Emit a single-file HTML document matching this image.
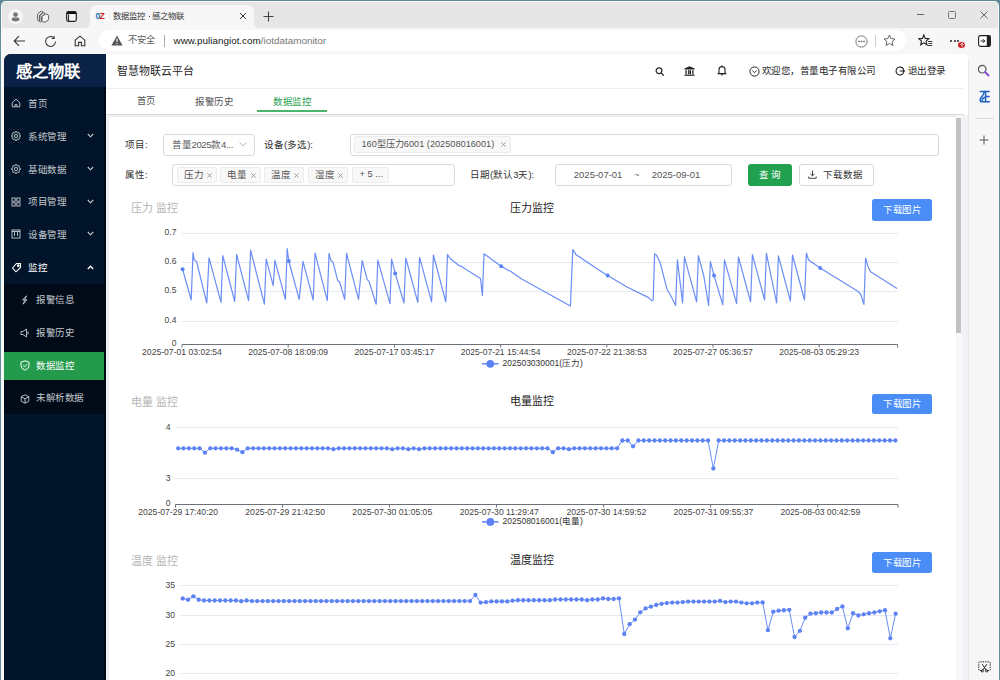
<!DOCTYPE html>
<html lang="zh-CN"><head><meta charset="utf-8">
<style>
*{margin:0;padding:0;box-sizing:border-box}
html,body{width:1000px;height:680px;overflow:hidden;background:#5f8b99;font-family:"Liberation Sans",sans-serif;}
.abs{position:absolute}
#win{position:absolute;left:1px;top:1px;width:998px;height:679px;background:#fcf9f9;border-radius:5px 5px 0 0;}
#tabstrip{position:absolute;left:2px;top:2px;width:996px;height:26px;background:#e6e6e6;border-radius:4px 4px 0 0}
#toolbar{position:absolute;left:2px;top:28px;width:996px;height:26px;background:#f7f7f7}
#pagebg{position:absolute;left:2px;top:54px;width:996px;height:626px;background:#f7f7f7}
#page{position:absolute;left:4px;top:54px;width:965px;height:626px;background:#fff;border-radius:7px 7px 0 0;overflow:hidden}
.t{position:absolute;white-space:nowrap;line-height:1}
.mi{font-size:9.5px;color:#c4c8ce}
</style></head><body>
<div id="win"></div>
<div id="tabstrip"></div>
<div id="toolbar"></div>
<div id="pagebg"></div>
<!-- tab strip icons -->
<div class="abs" style="left:8px;top:9px;width:15px;height:15px;border-radius:50%;background:#f6f6f6"></div>
<svg class="abs" style="left:8px;top:9px" width="15" height="15" viewBox="0 0 15 15"><circle cx="7.5" cy="5.6" r="2.4" fill="#777"/><path d="M3.6 10.2 Q3.6 8.6 5.2 8.6 H9.8 Q11.4 8.6 11.4 10.2 V10.6 Q11.4 12.4 7.5 12.4 Q3.6 12.4 3.6 10.6Z" fill="#777"/></svg>
<svg class="abs" style="left:36px;top:9px" width="14" height="14" viewBox="0 0 14 14" fill="none" stroke="#555" stroke-width="0.9" stroke-linejoin="round"><path d="M2 4.6 L5.2 2 L6.6 2.6 V4.2 L3.8 6.4 V11.6 L2.6 12.2 Q1.6 11.8 1.6 10.8 V5.4Z"/><path d="M3.8 6 L7 3.6 L8.6 4 V5.4 L5.6 7.8 V12.4 L4.4 13 Q3.6 12.6 3.6 11.8Z"/><path d="M6 7.4 L9.6 5 L12 5.6 Q12.6 5.9 12.6 6.6 V10.8 L9 13.2 L6.8 12.8 Q6 12.4 6 11.6Z" fill="#f2f2f2"/></svg>
<svg class="abs" style="left:66px;top:11px" width="11" height="11" viewBox="0 0 11 11"><rect x="0.7" y="0.7" width="9.6" height="9.6" rx="1.8" fill="#f4f4f4" stroke="#222" stroke-width="1.2"/><path d="M0.7 2.4 Q0.7 0.7 2.5 0.7 H8.5 Q10.3 0.7 10.3 2.4 V3 H0.7Z" fill="#111"/><path d="M2.6 3.4 V10" stroke="#222" stroke-width="1"/></svg>
<!-- active tab -->
<div class="abs" style="left:90px;top:5px;width:164px;height:23px;background:#f7f7f7;border-radius:6px 6px 0 0"></div>
<svg class="abs" style="left:84px;top:22px" width="6" height="6"><path d="M0 6 Q6 6 6 0 V6Z" fill="#f7f7f7"/></svg>
<svg class="abs" style="left:254px;top:22px" width="6" height="6"><path d="M6 6 Q0 6 0 0 V6Z" fill="#f7f7f7"/></svg>
<div class="t" style="left:95.5px;top:12px;font-size:8.6px;font-weight:bold;letter-spacing:-0.7px"><span style="color:#2a6fc0">0</span><span style="color:#d8201c">Z</span></div>
<div class="t" style="left:112.5px;top:11.5px;font-size:8.4px;letter-spacing:0.1px;color:#333">数据监控</div><div class="abs" style="left:148.8px;top:16px;width:1.2px;height:1.2px;background:#444"></div><div class="t" style="left:152px;top:11.5px;font-size:8.4px;letter-spacing:0.1px;color:#333">感之物联</div>
<svg class="abs" style="left:239px;top:12px" width="8" height="8" viewBox="0 0 8 8" stroke="#333" stroke-width="1"><path d="M1 1 L7 7 M7 1 L1 7"/></svg>
<svg class="abs" style="left:263px;top:11px" width="11" height="11" viewBox="0 0 11 11" stroke="#444" stroke-width="1.1"><path d="M5.5 0.5 V10.5 M0.5 5.5 H10.5"/></svg>
<!-- window controls -->
<div class="abs" style="left:917px;top:14px;width:7px;height:1px;background:#666"></div>
<div class="abs" style="left:948px;top:11px;width:7.5px;height:7.5px;border:1px solid #777;border-radius:1.5px"></div>
<svg class="abs" style="left:980px;top:11px" width="8" height="8" viewBox="0 0 8 8" stroke="#555" stroke-width="0.9"><path d="M0.5 0.5 L7.5 7.5 M7.5 0.5 L0.5 7.5"/></svg>
<!-- toolbar -->
<svg class="abs" style="left:13px;top:35px" width="13" height="12" viewBox="0 0 13 12" fill="none" stroke="#333" stroke-width="1.1"><path d="M12 6 H1.5 M6 1.2 L1.2 6 L6 10.8"/></svg>
<svg class="abs" style="left:43.5px;top:34.5px" width="13" height="13" viewBox="0 0 13 13" fill="none" stroke="#333" stroke-width="1.05"><path d="M11.4 6.5 A4.9 4.9 0 1 1 9.6 2.7"/><path d="M10.2 0.9 V3.4 H7.7"/></svg>
<svg class="abs" style="left:74px;top:35px" width="12" height="12" viewBox="0 0 12 12" fill="none" stroke="#333" stroke-width="1.1"><path d="M1.2 5.2 L6 1.2 L10.8 5.2 V10.8 H7.4 V7.4 H4.6 V10.8 H1.2Z"/></svg>
<div class="abs" style="left:99px;top:30px;width:807px;height:21px;background:#fff;border-radius:10.5px"></div>
<svg class="abs" style="left:111px;top:35px" width="12" height="11" viewBox="0 0 12 11"><path d="M6 0.5 L11.6 10.5 H0.4Z" fill="#555"/><path d="M6 3.6 V7" stroke="#fff" stroke-width="1.2"/><circle cx="6" cy="8.6" r="0.7" fill="#fff"/></svg>
<div class="t" style="left:128px;top:36px;font-size:9.3px;color:#606060">不安全</div>
<div class="abs" style="left:164px;top:35px;width:1px;height:12px;background:#aaa"></div>
<div class="t" style="left:173.5px;top:36px;font-size:9.9px;color:#1a1a1a">www.puliangiot.com<span style="color:#767676">/iotdatamonitor</span></div>
<svg class="abs" style="left:855px;top:35px" width="13" height="13" viewBox="0 0 13 13" fill="none" stroke="#666" stroke-width="0.9"><circle cx="6.5" cy="6.5" r="5.6"/><circle cx="4" cy="6.5" r="0.5" fill="#666"/><circle cx="6.5" cy="6.5" r="0.5" fill="#666"/><circle cx="9" cy="6.5" r="0.5" fill="#666"/></svg>
<div class="abs" style="left:875px;top:35px;width:1px;height:12px;background:#ccc"></div>
<svg class="abs" style="left:883px;top:34px" width="13" height="13" viewBox="0 0 13 13" fill="none" stroke="#555" stroke-width="0.9"><path d="M6.5 1 L8.1 4.6 L12 5 L9.1 7.6 L9.9 11.5 L6.5 9.5 L3.1 11.5 L3.9 7.6 L1 5 L4.9 4.6Z"/></svg>
<svg class="abs" style="left:918px;top:34px" width="15" height="13" viewBox="0 0 15 13" fill="none" stroke="#222" stroke-width="1.1"><path d="M5.8 1 L7.2 4.4 L10.8 4.7 L8.1 7.1 L8.9 10.8 L5.8 8.8 L2.7 10.8 L3.5 7.1 L0.8 4.7 L4.4 4.4Z"/><path d="M10 7.5 H14.2 M10.5 9.5 H14.2 M9.5 11.5 H14.2" stroke-width="0.9"/></svg>
<div class="abs" style="left:950px;top:40px;width:2px;height:2px;background:#222;border-radius:1px"></div>
<div class="abs" style="left:953.5px;top:40px;width:2px;height:2px;background:#222;border-radius:1px"></div>
<div class="abs" style="left:957px;top:40px;width:2px;height:2px;background:#222;border-radius:1px"></div>
<div class="abs" style="left:957.3px;top:40.5px;width:8.6px;height:8.6px;background:#c4161c;border-radius:50%;border:0.8px solid #fff"></div>
<svg class="abs" style="left:959px;top:42px" width="6" height="6" viewBox="0 0 6 6" stroke="#fff" stroke-width="0.9" fill="none"><path d="M3 5.2 V1.2 M1.4 2.8 L3 1.2 L4.6 2.8"/></svg>
<svg class="abs" style="left:978px;top:35px" width="13" height="12" viewBox="0 0 13 12"><rect x="0.6" y="0.6" width="11.8" height="10.8" rx="1.8" fill="#fff" stroke="#222" stroke-width="1.1"/><rect x="8.8" y="0.6" width="3.6" height="10.8" fill="#222"/><path d="M2.6 6 H6.6 M5 4.2 L6.8 6 L5 7.8" stroke="#222" stroke-width="1" fill="none"/></svg>
<!-- edge sidebar -->
<svg class="abs" style="left:977px;top:64px" width="13" height="13" viewBox="0 0 13 13" fill="none"><circle cx="5.2" cy="5.2" r="3.8" stroke="#555" stroke-width="1.2"/><path d="M8 8 L11.5 11.5" stroke="#8a4fd0" stroke-width="2" stroke-linecap="round"/></svg>
<svg class="abs" style="left:979px;top:89.5px" width="12" height="13" viewBox="0 0 12 13" fill="none" stroke="#1f62c6" stroke-width="1.5" stroke-linecap="round" stroke-linejoin="round"><path d="M1.2 1.4 H10.2 M6.6 1.4 V11.8 H10.4 M6.6 6.4 H10"/><path d="M5.2 1.6 Q5.2 4.4 3 6.4 Q1.2 8.2 1.2 10 Q1.2 11.8 3 11.8 H6.4 M6.4 7.2 Q3.4 7.8 3.2 10.2"/></svg>
<div class="abs" style="left:975px;top:118px;width:19px;height:1px;background:#ddd"></div>
<svg class="abs" style="left:979px;top:135px" width="10" height="10" viewBox="0 0 10 10" stroke="#555" stroke-width="1"><path d="M5 0.5 V9.5 M0.5 5 H9.5"/></svg>
<svg class="abs" style="left:977.5px;top:660.5px" width="13" height="12" viewBox="0 0 13 12" fill="none" stroke="#222" stroke-width="1"><path d="M3.5 9.5 H1.5 Q0.8 9.5 0.8 8.8 V1.6 Q0.8 0.8 1.6 0.8 H11.4 Q12.2 0.8 12.2 1.6 V8.8 Q12.2 9.5 11.5 9.5 H9.5" stroke-dasharray="1.4 1"/><path d="M4.2 3.2 L8.2 9 M8.8 3.2 L4.8 9"/><circle cx="4.3" cy="9.9" r="1.1"/><circle cx="8.7" cy="9.9" r="1.1"/></svg>
<div id="page">
<div id="g" class="abs" style="left:-4px;top:-54px;width:1000px;height:680px">
<!-- sidebar -->
<div class="abs" style="left:4px;top:54px;width:102px;height:626px;background:#021429"></div>
<div class="abs" style="left:104px;top:54px;width:2px;height:626px;background:#010b18"></div>
<div class="abs" style="left:4px;top:54px;width:102px;height:33px;background:#0a2245"></div>
<div class="t" style="left:16px;top:63px;font-size:16.3px;font-weight:bold;color:#fff">感之物联</div>
<div class="abs" style="left:4px;top:284px;width:100px;height:130px;background:#000b17"></div>
<div class="abs" style="left:4px;top:352px;width:100px;height:27.5px;background:#249a4c"></div>
<!-- menu items -->
<div class="t mi" style="left:28px;top:98.5px">首页</div>
<div class="t mi" style="left:28px;top:131.5px;letter-spacing:-0.5px">系统管理</div>
<div class="t mi" style="left:28px;top:164.5px;letter-spacing:-0.5px">基础数据</div>
<div class="t mi" style="left:28px;top:196.5px;letter-spacing:-0.5px">项目管理</div>
<div class="t mi" style="left:28px;top:229.5px;letter-spacing:-0.5px">设备管理</div>
<div class="t mi" style="left:28px;top:262.5px;color:#fff">监控</div>
<div class="t mi" style="left:36px;top:294.5px;letter-spacing:-0.5px">报警信息</div>
<div class="t mi" style="left:36px;top:327.5px;letter-spacing:-0.5px">报警历史</div>
<div class="t mi" style="left:36px;top:360.5px;color:#fff;letter-spacing:-0.5px">数据监控</div>
<div class="t mi" style="left:36px;top:392.5px;letter-spacing:-0.5px">未解析数据</div>
<!-- chevrons -->
<svg class="abs" style="left:87px;top:133px" width="7" height="5" viewBox="0 0 7 5" fill="none" stroke="#c8ccd2" stroke-width="1.1"><path d="M0.8 1 L3.5 3.8 L6.2 1"/></svg>
<svg class="abs" style="left:87px;top:166px" width="7" height="5" viewBox="0 0 7 5" fill="none" stroke="#c8ccd2" stroke-width="1.1"><path d="M0.8 1 L3.5 3.8 L6.2 1"/></svg>
<svg class="abs" style="left:87px;top:199px" width="7" height="5" viewBox="0 0 7 5" fill="none" stroke="#c8ccd2" stroke-width="1.1"><path d="M0.8 1 L3.5 3.8 L6.2 1"/></svg>
<svg class="abs" style="left:87px;top:231px" width="7" height="5" viewBox="0 0 7 5" fill="none" stroke="#c8ccd2" stroke-width="1.1"><path d="M0.8 1 L3.5 3.8 L6.2 1"/></svg>
<svg class="abs" style="left:87px;top:265px" width="7" height="5" viewBox="0 0 7 5" fill="none" stroke="#fff" stroke-width="1.3"><path d="M0.8 4 L3.5 1.2 L6.2 4"/></svg>
<!-- menu icons -->
<svg class="abs" style="left:11px;top:98px" width="10" height="10" viewBox="0 0 10 10" fill="none" stroke="#c8ccd2" stroke-width="0.9"><path d="M1.2 4.6 L5 1.2 L8.8 4.6 V8.8 H1.2Z M4 8.8 V6.6 H6 V8.8"/></svg>
<svg class="abs" style="left:11px;top:131px" width="10" height="10" viewBox="0 0 10 10" fill="none" stroke="#c8ccd2" stroke-width="0.9"><path d="M8.42 4.24 L9.57 4.45 L9.57 5.55 L8.42 5.76 L7.96 6.88 L8.62 7.84 L7.84 8.62 L6.88 7.96 L5.76 8.42 L5.55 9.57 L4.45 9.57 L4.24 8.42 L3.12 7.96 L2.16 8.62 L1.38 7.84 L2.04 6.88 L1.58 5.76 L0.43 5.55 L0.43 4.45 L1.58 4.24 L2.04 3.12 L1.38 2.16 L2.16 1.38 L3.12 2.04 L4.24 1.58 L4.45 0.43 L5.55 0.43 L5.76 1.58 L6.88 2.04 L7.84 1.38 L8.62 2.16 L7.96 3.12Z" stroke-linejoin="round"/><circle cx="5" cy="5" r="1.6"/></svg>
<svg class="abs" style="left:11px;top:164px" width="10" height="10" viewBox="0 0 10 10" fill="none" stroke="#c8ccd2" stroke-width="0.9"><path d="M8.42 4.24 L9.57 4.45 L9.57 5.55 L8.42 5.76 L7.96 6.88 L8.62 7.84 L7.84 8.62 L6.88 7.96 L5.76 8.42 L5.55 9.57 L4.45 9.57 L4.24 8.42 L3.12 7.96 L2.16 8.62 L1.38 7.84 L2.04 6.88 L1.58 5.76 L0.43 5.55 L0.43 4.45 L1.58 4.24 L2.04 3.12 L1.38 2.16 L2.16 1.38 L3.12 2.04 L4.24 1.58 L4.45 0.43 L5.55 0.43 L5.76 1.58 L6.88 2.04 L7.84 1.38 L8.62 2.16 L7.96 3.12Z" stroke-linejoin="round"/><circle cx="5" cy="5" r="1.6"/></svg>
<svg class="abs" style="left:11px;top:197px" width="10" height="10" viewBox="0 0 10 10" fill="none" stroke="#c8ccd2" stroke-width="0.9"><rect x="1" y="1" width="3.2" height="3.2"/><rect x="5.8" y="1" width="3.2" height="3.2"/><rect x="1" y="5.8" width="3.2" height="3.2"/><rect x="5.8" y="5.8" width="3.2" height="3.2"/></svg>
<svg class="abs" style="left:11px;top:229px" width="10" height="10" viewBox="0 0 10 10" fill="none" stroke="#c8ccd2" stroke-width="0.9"><rect x="1" y="1" width="8" height="8"/><path d="M3.5 3 V7 M6.5 3 V7 M1 2.5 H9"/></svg>
<svg class="abs" style="left:11px;top:262px" width="11" height="11" viewBox="0 0 11 11" fill="none" stroke="#fff" stroke-width="1.1"><path d="M1.5 6 L5.5 1.5 L9.5 1.5 L9.5 5.5 L5 9.8 Z"/><circle cx="7.3" cy="3.7" r="0.8" fill="#fff"/></svg>
<svg class="abs" style="left:20px;top:295px" width="9" height="10" viewBox="0 0 9 10" fill="none" stroke="#c8ccd2" stroke-width="0.9"><path d="M6.5 0.8 L2.5 5 H5 L3 9.2 L7 4.8 H4.6Z"/></svg>
<svg class="abs" style="left:20px;top:328px" width="10" height="10" viewBox="0 0 10 10" fill="none" stroke="#c8ccd2" stroke-width="0.9"><path d="M1 3.5 H3 L6.5 1 V9 L3 6.5 H1Z M8 3.5 V6.5"/></svg>
<svg class="abs" style="left:20px;top:360px" width="10" height="11" viewBox="0 0 10 11" fill="none" stroke="#fff" stroke-width="1"><path d="M5 0.8 L9 2.2 V5.5 Q9 8.8 5 10.2 Q1 8.8 1 5.5 V2.2Z"/><path d="M3.2 5.5 L4.6 6.8 L7 4.2"/></svg>
<svg class="abs" style="left:20px;top:394px" width="10" height="10" viewBox="0 0 10 10" fill="none" stroke="#c8ccd2" stroke-width="0.9"><path d="M5 0.8 L8.8 2.8 V7.2 L5 9.2 L1.2 7.2 V2.8Z M1.2 2.8 L5 4.8 L8.8 2.8 M5 4.8 V9.2"/></svg>

<!-- header -->
<div class="abs" style="left:106px;top:88px;width:858px;height:1px;background:#efefef"></div>
<div class="t" style="left:117px;top:65.5px;font-size:10.9px;color:#262626">智慧物联云平台</div>
<svg class="abs" style="left:655px;top:67px" width="10" height="9" viewBox="0 0 10 9" fill="none" stroke="#222" stroke-width="1.2"><circle cx="4" cy="3.8" r="2.9"/><path d="M6.2 6 L8.8 8.6"/></svg>
<svg class="abs" style="left:684px;top:66px" width="11" height="10" viewBox="0 0 11 10" fill="#222"><path d="M5.5 0.2 L10.6 2.6 V3.6 H0.4 V2.6Z"/><rect x="1.5" y="4.2" width="1.3" height="4"/><rect x="4.1" y="4.2" width="1.3" height="4"/><rect x="5.7" y="4.2" width="1.3" height="4"/><rect x="8.2" y="4.2" width="1.3" height="4"/><rect x="0.4" y="8.6" width="10.2" height="1.2"/></svg>
<svg class="abs" style="left:717px;top:65px" width="10" height="11" viewBox="0 0 10 11" fill="none" stroke="#222" stroke-width="1.1"><path d="M1.2 8.6 H8.8 L8 7.6 V4.6 Q8 1.6 5 1.6 Q2 1.6 2 4.6 V7.6Z"/><path d="M5 0.4 V1.6 M3.8 9.8 H6.2"/></svg>
<svg class="abs" style="left:749px;top:66px" width="11" height="11" viewBox="0 0 11 11" fill="none" stroke="#222" stroke-width="1"><circle cx="5.5" cy="5.5" r="4.6"/><path d="M3.4 4.6 L5.5 6.7 L7.6 4.6"/></svg>
<div class="t" style="left:761.5px;top:66px;font-size:9.5px;letter-spacing:-0.5px;color:#262626">欢迎您，普量电子有限公司</div>
<svg class="abs" style="left:895px;top:66px" width="10" height="10" viewBox="0 0 10 10" fill="none" stroke="#222" stroke-width="1.1"><path d="M8.6 3.2 A4 4 0 1 0 8.6 6.8"/><path d="M4.6 5 H9.6 M7.8 3.4 L9.4 5 L7.8 6.6"/></svg>
<div class="t" style="left:907.5px;top:66px;font-size:9.6px;letter-spacing:-0.4px;color:#262626">退出登录</div>
<!-- tabs -->
<div class="t" style="left:137px;top:97px;font-size:9.2px;color:#555">首页</div>
<div class="t" style="left:195px;top:97px;font-size:9.5px;letter-spacing:-0.3px;color:#555">报警历史</div>
<div class="t" style="left:273px;top:97px;font-size:9.5px;letter-spacing:-0.5px;color:#27a04e">数据监控</div>
<div class="abs" style="left:257px;top:110px;width:70px;height:1.5px;background:#4bb56c"></div>
<div class="abs" style="left:106px;top:114px;width:858px;height:1px;background:#dadada"></div>
<div class="abs" style="left:106px;top:115px;width:863px;height:565px;background:#f1f2f5"></div>
<div class="abs" style="left:109px;top:117px;width:847px;height:563px;background:#fff;box-shadow:0 0 2px rgba(0,0,0,0.07)"></div>
<div class="t" style="left:125px;top:140.2px;font-size:9.5px;color:#333;">项目:</div>
<div class="abs" style="left:163px;top:134px;width:92px;height:22px;border:1px solid #d9d9d9;border-radius:3px;background:#fff"></div>
<div class="t" style="left:172px;top:140.2px;font-size:9.5px;color:#5a5a5a;letter-spacing:-0.3px">普量2025款4...</div>
<svg class="abs" style="left:239px;top:142px" width="8" height="5" viewBox="0 0 8 5" fill="none" stroke="#aaa" stroke-width="0.9"><path d="M0.6 0.6 L4 4 L7.4 0.6"/></svg>
<div class="t" style="left:264px;top:140.2px;font-size:9.5px;color:#333;">设备(多选):</div>
<div class="abs" style="left:350px;top:134px;width:589px;height:22px;border:1px solid #d9d9d9;border-radius:3px;background:#fff"></div>
<div class="abs" style="left:354px;top:136px;width:157px;height:17px;border:1px solid #ebebeb;border-radius:2px;background:#f8f8f8"></div>
<div class="t" style="left:361.5px;top:140.2px;font-size:9.2px;color:#555;">160型压力6001 (202508016001)</div>
<svg class="abs" style="left:501px;top:142px" width="5" height="5" viewBox="0 0 5 5" stroke="#888" stroke-width="0.8"><path d="M0.4 0.4 L4.6 4.6 M4.6 0.4 L0.4 4.6"/></svg>
<div class="t" style="left:125px;top:170.2px;font-size:9.5px;color:#333;">属性:</div>
<div class="abs" style="left:172px;top:164px;width:283px;height:22px;border:1px solid #d9d9d9;border-radius:3px;background:#fff"></div>
<div class="abs" style="left:176.5px;top:167px;width:40.5px;height:16px;border:1px solid #ebebeb;border-radius:2px;background:#f8f8f8"></div>
<div class="t" style="left:183.5px;top:170.2px;font-size:9.5px;color:#555;">压力</div>
<svg class="abs" style="left:207px;top:172.5px" width="5" height="5" viewBox="0 0 5 5" stroke="#888" stroke-width="0.8"><path d="M0.4 0.4 L4.6 4.6 M4.6 0.4 L0.4 4.6"/></svg>
<div class="abs" style="left:220px;top:167px;width:40.5px;height:16px;border:1px solid #ebebeb;border-radius:2px;background:#f8f8f8"></div>
<div class="t" style="left:227px;top:170.2px;font-size:9.5px;color:#555;">电量</div>
<svg class="abs" style="left:250.5px;top:172.5px" width="5" height="5" viewBox="0 0 5 5" stroke="#888" stroke-width="0.8"><path d="M0.4 0.4 L4.6 4.6 M4.6 0.4 L0.4 4.6"/></svg>
<div class="abs" style="left:264px;top:167px;width:40px;height:16px;border:1px solid #ebebeb;border-radius:2px;background:#f8f8f8"></div>
<div class="t" style="left:271px;top:170.2px;font-size:9.5px;color:#555;">温度</div>
<svg class="abs" style="left:294px;top:172.5px" width="5" height="5" viewBox="0 0 5 5" stroke="#888" stroke-width="0.8"><path d="M0.4 0.4 L4.6 4.6 M4.6 0.4 L0.4 4.6"/></svg>
<div class="abs" style="left:307.5px;top:167px;width:40.0px;height:16px;border:1px solid #ebebeb;border-radius:2px;background:#f8f8f8"></div>
<div class="t" style="left:314.5px;top:170.2px;font-size:9.5px;color:#555;">湿度</div>
<svg class="abs" style="left:337.5px;top:172.5px" width="5" height="5" viewBox="0 0 5 5" stroke="#888" stroke-width="0.8"><path d="M0.4 0.4 L4.6 4.6 M4.6 0.4 L0.4 4.6"/></svg>
<div class="abs" style="left:351.5px;top:167px;width:37.5px;height:16px;border:1px solid #ebebeb;border-radius:2px;background:#f8f8f8"></div>
<div class="t" style="left:359.5px;top:170.2px;font-size:9.3px;color:#555;">+ 5 ...</div>
<div class="t" style="left:470px;top:170.2px;font-size:9.5px;color:#333;">日期(默认3天):</div>
<div class="abs" style="left:555px;top:164px;width:177px;height:22px;border:1px solid #d9d9d9;border-radius:3px;background:#fff"></div>
<div class="t" style="left:573.8px;top:170.2px;font-size:9.5px;color:#555;">2025-07-01</div>
<div class="t" style="left:634px;top:169.5px;font-size:9.5px;color:#777;">~</div>
<div class="t" style="left:651.7px;top:170.2px;font-size:9.5px;color:#555;">2025-09-01</div>
<div class="abs" style="left:748px;top:164px;width:44px;height:22px;border-radius:3px;background:#21a04f"></div>
<div class="t" style="left:758.5px;top:170.2px;font-size:9.5px;color:#fff;">查 询</div>
<div class="abs" style="left:799px;top:164px;width:75px;height:22px;border:1px solid #d9d9d9;border-radius:3px;background:#fff"></div>
<svg class="abs" style="left:808px;top:170px" width="9" height="9" viewBox="0 0 9 9" fill="none" stroke="#333" stroke-width="0.9"><path d="M4.5 0.5 V5.8 M2.4 3.8 L4.5 5.9 L6.6 3.8 M0.8 6.5 V8.3 H8.2 V6.5"/></svg>
<div class="t" style="left:823px;top:170.2px;font-size:9.5px;color:#333;">下载数据</div>
<div class="t" style="left:131px;top:202.8px;font-size:11px;color:#b4b4b4;">压力 监控</div>
<div class="t" style="left:510px;top:203.3px;font-size:11px;color:#222;font-weight:500">压力监控</div>
<div class="abs" style="left:872px;top:199.3px;width:59.5px;height:21.5px;border-radius:2.5px;background:#4a8df7"></div>
<div class="t" style="left:883px;top:204.85000000000002px;font-size:9.5px;color:#fff;letter-spacing:-0.3px">下载图片</div>
<div class="t" style="left:140px;width:36.5px;text-align:right;top:228.3px;font-size:8.6px;color:#444">0.7</div>
<div class="t" style="left:140px;width:36.5px;text-align:right;top:257.3px;font-size:8.6px;color:#444">0.6</div>
<div class="t" style="left:140px;width:36.5px;text-align:right;top:286.3px;font-size:8.6px;color:#444">0.5</div>
<div class="t" style="left:140px;width:36.5px;text-align:right;top:316.3px;font-size:8.6px;color:#444">0.4</div>
<div class="t" style="left:140px;width:36.5px;text-align:right;top:338.6px;font-size:8.6px;color:#444">0</div>
<div class="t" style="left:122.0px;width:120px;text-align:center;top:348.20000000000005px;font-size:8.6px;color:#444">2025-07-01 03:02:54</div>
<div class="t" style="left:228.2px;width:120px;text-align:center;top:348.20000000000005px;font-size:8.6px;color:#444">2025-07-08 18:09:09</div>
<div class="t" style="left:334.4px;width:120px;text-align:center;top:348.20000000000005px;font-size:8.6px;color:#444">2025-07-17 03:45:17</div>
<div class="t" style="left:440.6px;width:120px;text-align:center;top:348.20000000000005px;font-size:8.6px;color:#444">2025-07-21 15:44:54</div>
<div class="t" style="left:546.8px;width:120px;text-align:center;top:348.20000000000005px;font-size:8.6px;color:#444">2025-07-22 21:38:53</div>
<div class="t" style="left:653.0px;width:120px;text-align:center;top:348.20000000000005px;font-size:8.6px;color:#444">2025-07-27 05:36:57</div>
<div class="t" style="left:759.2px;width:120px;text-align:center;top:348.20000000000005px;font-size:8.6px;color:#444">2025-08-03 05:29:23</div>
<div class="t" style="left:502.5px;top:359.2px;font-size:8.5px;color:#333;">202503030001(压力)</div>
<div class="t" style="left:131px;top:396.8px;font-size:11px;color:#b4b4b4;">电量 监控</div>
<div class="t" style="left:510px;top:395.8px;font-size:11px;color:#222;font-weight:500">电量监控</div>
<div class="abs" style="left:872px;top:393.8px;width:59.5px;height:20.599999999999966px;border-radius:2.5px;background:#4a8df7"></div>
<div class="t" style="left:883px;top:398.90000000000003px;font-size:9.5px;color:#fff;letter-spacing:-0.3px">下载图片</div>
<div class="t" style="left:130px;width:40.5px;text-align:right;top:423.1px;font-size:8.6px;color:#444">4</div>
<div class="t" style="left:130px;width:40.5px;text-align:right;top:474.1px;font-size:8.6px;color:#444">3</div>
<div class="t" style="left:130px;width:40.5px;text-align:right;top:498.6px;font-size:8.6px;color:#444">0</div>
<div class="t" style="left:118.19999999999999px;width:120px;text-align:center;top:508.1px;font-size:8.6px;color:#444">2025-07-29 17:40:20</div>
<div class="t" style="left:225.23703703703706px;width:120px;text-align:center;top:508.1px;font-size:8.6px;color:#444">2025-07-29 21:42:50</div>
<div class="t" style="left:332.27407407407406px;width:120px;text-align:center;top:508.1px;font-size:8.6px;color:#444">2025-07-30 01:05:05</div>
<div class="t" style="left:439.3111111111111px;width:120px;text-align:center;top:508.1px;font-size:8.6px;color:#444">2025-07-30 11:29:47</div>
<div class="t" style="left:546.3481481481482px;width:120px;text-align:center;top:508.1px;font-size:8.6px;color:#444">2025-07-30 14:59:52</div>
<div class="t" style="left:653.3851851851853px;width:120px;text-align:center;top:508.1px;font-size:8.6px;color:#444">2025-07-31 09:55:37</div>
<div class="t" style="left:760.4222222222222px;width:120px;text-align:center;top:508.1px;font-size:8.6px;color:#444">2025-08-03 00:42:59</div>
<div class="t" style="left:502.5px;top:517.3px;font-size:8.5px;color:#333;">202508016001(电量)</div>
<div class="t" style="left:131px;top:555.5px;font-size:11px;color:#b4b4b4;">温度 监控</div>
<div class="t" style="left:510px;top:554.8px;font-size:11px;color:#222;font-weight:500">温度监控</div>
<div class="abs" style="left:872px;top:552.4px;width:59.5px;height:20.700000000000045px;border-radius:2.5px;background:#4a8df7"></div>
<div class="t" style="left:883px;top:557.55px;font-size:9.5px;color:#fff;letter-spacing:-0.3px">下载图片</div>
<div class="t" style="left:130px;width:45px;text-align:right;top:580.5px;font-size:8.6px;color:#444">35</div>
<div class="t" style="left:130px;width:45px;text-align:right;top:610.5px;font-size:8.6px;color:#444">30</div>
<div class="t" style="left:130px;width:45px;text-align:right;top:639.5px;font-size:8.6px;color:#444">25</div>
<div class="t" style="left:130px;width:45px;text-align:right;top:668.5px;font-size:8.6px;color:#444">20</div>
<svg class="abs" style="left:0;top:0" width="1000" height="680" viewBox="0 0 1000 680" shape-rendering="geometricPrecision"><line x1="182" y1="233.5" x2="897.6" y2="233.5" stroke="#e4e8f3" stroke-width="1"/><line x1="182" y1="262.5" x2="897.6" y2="262.5" stroke="#e4e8f3" stroke-width="1"/><line x1="182" y1="291.5" x2="897.6" y2="291.5" stroke="#e4e8f3" stroke-width="1"/><line x1="182" y1="321.5" x2="897.6" y2="321.5" stroke="#e4e8f3" stroke-width="1"/><line x1="182" y1="344.5" x2="897.6" y2="344.5" stroke="#6e7079" stroke-width="1"/><line x1="182.0" y1="344.5" x2="182.0" y2="347.5" stroke="#6e7079" stroke-width="1"/><line x1="288.2" y1="344.5" x2="288.2" y2="347.5" stroke="#6e7079" stroke-width="1"/><line x1="394.4" y1="344.5" x2="394.4" y2="347.5" stroke="#6e7079" stroke-width="1"/><line x1="500.6" y1="344.5" x2="500.6" y2="347.5" stroke="#6e7079" stroke-width="1"/><line x1="606.8" y1="344.5" x2="606.8" y2="347.5" stroke="#6e7079" stroke-width="1"/><line x1="713.0" y1="344.5" x2="713.0" y2="347.5" stroke="#6e7079" stroke-width="1"/><line x1="819.2" y1="344.5" x2="819.2" y2="347.5" stroke="#6e7079" stroke-width="1"/><line x1="897.6" y1="344.5" x2="897.6" y2="347.5" stroke="#6e7079" stroke-width="1"/><polyline fill="none" stroke="#6a8df5" stroke-width="1.2" stroke-linejoin="round" points="182.6,269.2 191.2,300 193,252.6 194.2,259.8 196.6,261.6 206.8,303 209,257.8 221,302.4 222.8,255.6 234.7,301.5 236.6,254.4 248.6,300.6 250.6,250.2 264.4,304.2 266.2,259.2 273.2,285.6 274.9,260.4 285.4,299.4 287.2,248.6 288.8,261 299.2,299.4 303,261.4 313.2,300 315,253 327.3,300.6 329,253.4 330.9,260.6 333,262.2 337.8,280.8 339.6,282 344.7,299.4 346.5,253.2 358.5,299.4 362.2,260.6 367.2,279.6 369,281.4 376.2,304.2 377.8,260.2 390,303.6 391.6,259.2 395.2,273.4 404,303 405.8,258 417.8,302.4 419.6,257.4 431.6,301.8 433.4,255 445.8,301.8 447.5,254.4 449.6,258 459.2,265.8 461,266.2 480.5,278.4 482.4,295.5 484,253.8 501.2,266.2 508.4,270.6 510.2,271 521.2,278.7 570.4,306 572.8,249.6 575.8,254.4 596.2,268.2 607.6,275.4 627,287 648.6,297.6 651.6,300.6 653.2,300 654.6,253.8 656.4,255 660,262.2 667.2,289.8 670.8,295.8 675.6,305.4 677.4,259.8 682.6,303 684.4,256.8 696.6,301.8 698.4,255.6 703.8,276 708.6,305.4 710.4,261.6 714,275.4 722.8,304.8 724.5,259.8 736.6,303.6 738.4,257 750.6,301.8 752.4,254.6 764.6,300 766.4,253.4 776.6,303 778.4,255.8 790.4,301.2 792.5,255 804.5,300 806.4,253 808.6,260 820.2,268 858.2,291.5 860.9,294.7 863.9,304.4 865.6,258 868,266.5 870.6,271.8 897,288.5"/><circle cx="182.6" cy="269.2" r="2" fill="#5c82f3"/><circle cx="288.8" cy="261" r="2" fill="#5c82f3"/><circle cx="395.2" cy="273.4" r="2" fill="#5c82f3"/><circle cx="501.2" cy="266.2" r="2" fill="#5c82f3"/><circle cx="607.6" cy="275.4" r="2" fill="#5c82f3"/><circle cx="714" cy="275.4" r="2" fill="#5c82f3"/><circle cx="820.2" cy="268" r="2" fill="#5c82f3"/><line x1="482" y1="363.8" x2="498.6" y2="363.8" stroke="#6a8df5" stroke-width="1.6"/><circle cx="490.3" cy="363.8" r="3.9" fill="#5c82f3"/><line x1="175.5" y1="427.5" x2="898" y2="427.5" stroke="#e4e8f3" stroke-width="1"/><line x1="175.5" y1="478.5" x2="898" y2="478.5" stroke="#e4e8f3" stroke-width="1"/><line x1="175.5" y1="504.5" x2="898" y2="504.5" stroke="#6e7079" stroke-width="1"/><line x1="175.5" y1="504.5" x2="175.5" y2="507.5" stroke="#6e7079" stroke-width="1"/><line x1="282.53703703703707" y1="504.5" x2="282.53703703703707" y2="507.5" stroke="#6e7079" stroke-width="1"/><line x1="389.5740740740741" y1="504.5" x2="389.5740740740741" y2="507.5" stroke="#6e7079" stroke-width="1"/><line x1="496.6111111111111" y1="504.5" x2="496.6111111111111" y2="507.5" stroke="#6e7079" stroke-width="1"/><line x1="603.6481481481482" y1="504.5" x2="603.6481481481482" y2="507.5" stroke="#6e7079" stroke-width="1"/><line x1="710.6851851851852" y1="504.5" x2="710.6851851851852" y2="507.5" stroke="#6e7079" stroke-width="1"/><line x1="817.7222222222222" y1="504.5" x2="817.7222222222222" y2="507.5" stroke="#6e7079" stroke-width="1"/><line x1="898" y1="504.5" x2="898" y2="507.5" stroke="#6e7079" stroke-width="1"/><polyline fill="none" stroke="#6a8df5" stroke-width="1" points="178.18,448.3 183.53,448.3 188.88,448.3 194.23,448.3 199.58,448.3 204.94,452.7 210.29,448.3 215.64,448.3 220.99,448.3 226.34,448.3 231.69,448.3 237.05,449.7 242.4,452.2 247.75,448.3 253.1,448.3 258.45,448.3 263.81,448.3 269.16,448.3 274.51,448.3 279.86,448.3 285.21,448.3 290.56,448.3 295.92,448.3 301.27,448.3 306.62,448.3 311.97,448.3 317.32,448.3 322.68,448.3 328.03,448.3 333.38,449.2 338.73,448.3 344.08,448.3 349.44,448.3 354.79,448.3 360.14,448.3 365.49,448.3 370.84,448.3 376.19,448.3 381.55,448.3 386.9,448.3 392.25,449.2 397.6,448.3 402.95,448.3 408.31,449.2 413.66,448.3 419.01,449.2 424.36,448.3 429.71,448.3 435.06,448.3 440.42,448.3 445.77,448.3 451.12,448.3 456.47,448.3 461.82,448.3 467.18,448.3 472.53,448.3 477.88,448.3 483.23,448.3 488.58,448.3 493.94,448.3 499.29,448.3 504.64,448.3 509.99,448.3 515.34,448.3 520.69,448.3 526.05,448.3 531.4,448.3 536.75,448.3 542.1,448.3 547.45,448.3 552.81,452.2 558.16,448.3 563.51,448.3 568.86,449.2 574.21,448.3 579.56,448.3 584.92,448.3 590.27,448.3 595.62,448.3 600.97,448.3 606.32,448.3 611.68,448.3 617.03,448.3 622.38,440.5 627.73,440.5 633.08,446.3 638.44,440.5 643.79,440.5 649.14,440.5 654.49,440.5 659.84,440.5 665.19,440.5 670.55,440.5 675.9,440.5 681.25,440.5 686.6,440.5 691.95,440.5 697.31,440.5 702.66,440.5 708.01,440.5 713.36,468.5 718.71,440.5 724.06,440.5 729.42,440.5 734.77,440.5 740.12,440.5 745.47,440.5 750.82,440.5 756.18,440.5 761.53,440.5 766.88,440.5 772.23,440.5 777.58,440.5 782.94,440.5 788.29,440.5 793.64,440.5 798.99,440.5 804.34,440.5 809.69,440.5 815.05,440.5 820.4,440.5 825.75,440.5 831.1,440.5 836.45,440.5 841.81,440.5 847.16,440.5 852.51,440.5 857.86,440.5 863.21,440.5 868.56,440.5 873.92,440.5 879.27,440.5 884.62,440.5 889.97,440.5 895.32,440.5"/><circle cx="178.18" cy="448.3" r="2.15" fill="#5c82f3"/><circle cx="183.53" cy="448.3" r="2.15" fill="#5c82f3"/><circle cx="188.88" cy="448.3" r="2.15" fill="#5c82f3"/><circle cx="194.23" cy="448.3" r="2.15" fill="#5c82f3"/><circle cx="199.58" cy="448.3" r="2.15" fill="#5c82f3"/><circle cx="204.94" cy="452.7" r="2.15" fill="#5c82f3"/><circle cx="210.29" cy="448.3" r="2.15" fill="#5c82f3"/><circle cx="215.64" cy="448.3" r="2.15" fill="#5c82f3"/><circle cx="220.99" cy="448.3" r="2.15" fill="#5c82f3"/><circle cx="226.34" cy="448.3" r="2.15" fill="#5c82f3"/><circle cx="231.69" cy="448.3" r="2.15" fill="#5c82f3"/><circle cx="237.05" cy="449.7" r="2.15" fill="#5c82f3"/><circle cx="242.4" cy="452.2" r="2.15" fill="#5c82f3"/><circle cx="247.75" cy="448.3" r="2.15" fill="#5c82f3"/><circle cx="253.1" cy="448.3" r="2.15" fill="#5c82f3"/><circle cx="258.45" cy="448.3" r="2.15" fill="#5c82f3"/><circle cx="263.81" cy="448.3" r="2.15" fill="#5c82f3"/><circle cx="269.16" cy="448.3" r="2.15" fill="#5c82f3"/><circle cx="274.51" cy="448.3" r="2.15" fill="#5c82f3"/><circle cx="279.86" cy="448.3" r="2.15" fill="#5c82f3"/><circle cx="285.21" cy="448.3" r="2.15" fill="#5c82f3"/><circle cx="290.56" cy="448.3" r="2.15" fill="#5c82f3"/><circle cx="295.92" cy="448.3" r="2.15" fill="#5c82f3"/><circle cx="301.27" cy="448.3" r="2.15" fill="#5c82f3"/><circle cx="306.62" cy="448.3" r="2.15" fill="#5c82f3"/><circle cx="311.97" cy="448.3" r="2.15" fill="#5c82f3"/><circle cx="317.32" cy="448.3" r="2.15" fill="#5c82f3"/><circle cx="322.68" cy="448.3" r="2.15" fill="#5c82f3"/><circle cx="328.03" cy="448.3" r="2.15" fill="#5c82f3"/><circle cx="333.38" cy="449.2" r="2.15" fill="#5c82f3"/><circle cx="338.73" cy="448.3" r="2.15" fill="#5c82f3"/><circle cx="344.08" cy="448.3" r="2.15" fill="#5c82f3"/><circle cx="349.44" cy="448.3" r="2.15" fill="#5c82f3"/><circle cx="354.79" cy="448.3" r="2.15" fill="#5c82f3"/><circle cx="360.14" cy="448.3" r="2.15" fill="#5c82f3"/><circle cx="365.49" cy="448.3" r="2.15" fill="#5c82f3"/><circle cx="370.84" cy="448.3" r="2.15" fill="#5c82f3"/><circle cx="376.19" cy="448.3" r="2.15" fill="#5c82f3"/><circle cx="381.55" cy="448.3" r="2.15" fill="#5c82f3"/><circle cx="386.9" cy="448.3" r="2.15" fill="#5c82f3"/><circle cx="392.25" cy="449.2" r="2.15" fill="#5c82f3"/><circle cx="397.6" cy="448.3" r="2.15" fill="#5c82f3"/><circle cx="402.95" cy="448.3" r="2.15" fill="#5c82f3"/><circle cx="408.31" cy="449.2" r="2.15" fill="#5c82f3"/><circle cx="413.66" cy="448.3" r="2.15" fill="#5c82f3"/><circle cx="419.01" cy="449.2" r="2.15" fill="#5c82f3"/><circle cx="424.36" cy="448.3" r="2.15" fill="#5c82f3"/><circle cx="429.71" cy="448.3" r="2.15" fill="#5c82f3"/><circle cx="435.06" cy="448.3" r="2.15" fill="#5c82f3"/><circle cx="440.42" cy="448.3" r="2.15" fill="#5c82f3"/><circle cx="445.77" cy="448.3" r="2.15" fill="#5c82f3"/><circle cx="451.12" cy="448.3" r="2.15" fill="#5c82f3"/><circle cx="456.47" cy="448.3" r="2.15" fill="#5c82f3"/><circle cx="461.82" cy="448.3" r="2.15" fill="#5c82f3"/><circle cx="467.18" cy="448.3" r="2.15" fill="#5c82f3"/><circle cx="472.53" cy="448.3" r="2.15" fill="#5c82f3"/><circle cx="477.88" cy="448.3" r="2.15" fill="#5c82f3"/><circle cx="483.23" cy="448.3" r="2.15" fill="#5c82f3"/><circle cx="488.58" cy="448.3" r="2.15" fill="#5c82f3"/><circle cx="493.94" cy="448.3" r="2.15" fill="#5c82f3"/><circle cx="499.29" cy="448.3" r="2.15" fill="#5c82f3"/><circle cx="504.64" cy="448.3" r="2.15" fill="#5c82f3"/><circle cx="509.99" cy="448.3" r="2.15" fill="#5c82f3"/><circle cx="515.34" cy="448.3" r="2.15" fill="#5c82f3"/><circle cx="520.69" cy="448.3" r="2.15" fill="#5c82f3"/><circle cx="526.05" cy="448.3" r="2.15" fill="#5c82f3"/><circle cx="531.4" cy="448.3" r="2.15" fill="#5c82f3"/><circle cx="536.75" cy="448.3" r="2.15" fill="#5c82f3"/><circle cx="542.1" cy="448.3" r="2.15" fill="#5c82f3"/><circle cx="547.45" cy="448.3" r="2.15" fill="#5c82f3"/><circle cx="552.81" cy="452.2" r="2.15" fill="#5c82f3"/><circle cx="558.16" cy="448.3" r="2.15" fill="#5c82f3"/><circle cx="563.51" cy="448.3" r="2.15" fill="#5c82f3"/><circle cx="568.86" cy="449.2" r="2.15" fill="#5c82f3"/><circle cx="574.21" cy="448.3" r="2.15" fill="#5c82f3"/><circle cx="579.56" cy="448.3" r="2.15" fill="#5c82f3"/><circle cx="584.92" cy="448.3" r="2.15" fill="#5c82f3"/><circle cx="590.27" cy="448.3" r="2.15" fill="#5c82f3"/><circle cx="595.62" cy="448.3" r="2.15" fill="#5c82f3"/><circle cx="600.97" cy="448.3" r="2.15" fill="#5c82f3"/><circle cx="606.32" cy="448.3" r="2.15" fill="#5c82f3"/><circle cx="611.68" cy="448.3" r="2.15" fill="#5c82f3"/><circle cx="617.03" cy="448.3" r="2.15" fill="#5c82f3"/><circle cx="622.38" cy="440.5" r="2.15" fill="#5c82f3"/><circle cx="627.73" cy="440.5" r="2.15" fill="#5c82f3"/><circle cx="633.08" cy="446.3" r="2.15" fill="#5c82f3"/><circle cx="638.44" cy="440.5" r="2.15" fill="#5c82f3"/><circle cx="643.79" cy="440.5" r="2.15" fill="#5c82f3"/><circle cx="649.14" cy="440.5" r="2.15" fill="#5c82f3"/><circle cx="654.49" cy="440.5" r="2.15" fill="#5c82f3"/><circle cx="659.84" cy="440.5" r="2.15" fill="#5c82f3"/><circle cx="665.19" cy="440.5" r="2.15" fill="#5c82f3"/><circle cx="670.55" cy="440.5" r="2.15" fill="#5c82f3"/><circle cx="675.9" cy="440.5" r="2.15" fill="#5c82f3"/><circle cx="681.25" cy="440.5" r="2.15" fill="#5c82f3"/><circle cx="686.6" cy="440.5" r="2.15" fill="#5c82f3"/><circle cx="691.95" cy="440.5" r="2.15" fill="#5c82f3"/><circle cx="697.31" cy="440.5" r="2.15" fill="#5c82f3"/><circle cx="702.66" cy="440.5" r="2.15" fill="#5c82f3"/><circle cx="708.01" cy="440.5" r="2.15" fill="#5c82f3"/><circle cx="713.36" cy="468.5" r="2.15" fill="#5c82f3"/><circle cx="718.71" cy="440.5" r="2.15" fill="#5c82f3"/><circle cx="724.06" cy="440.5" r="2.15" fill="#5c82f3"/><circle cx="729.42" cy="440.5" r="2.15" fill="#5c82f3"/><circle cx="734.77" cy="440.5" r="2.15" fill="#5c82f3"/><circle cx="740.12" cy="440.5" r="2.15" fill="#5c82f3"/><circle cx="745.47" cy="440.5" r="2.15" fill="#5c82f3"/><circle cx="750.82" cy="440.5" r="2.15" fill="#5c82f3"/><circle cx="756.18" cy="440.5" r="2.15" fill="#5c82f3"/><circle cx="761.53" cy="440.5" r="2.15" fill="#5c82f3"/><circle cx="766.88" cy="440.5" r="2.15" fill="#5c82f3"/><circle cx="772.23" cy="440.5" r="2.15" fill="#5c82f3"/><circle cx="777.58" cy="440.5" r="2.15" fill="#5c82f3"/><circle cx="782.94" cy="440.5" r="2.15" fill="#5c82f3"/><circle cx="788.29" cy="440.5" r="2.15" fill="#5c82f3"/><circle cx="793.64" cy="440.5" r="2.15" fill="#5c82f3"/><circle cx="798.99" cy="440.5" r="2.15" fill="#5c82f3"/><circle cx="804.34" cy="440.5" r="2.15" fill="#5c82f3"/><circle cx="809.69" cy="440.5" r="2.15" fill="#5c82f3"/><circle cx="815.05" cy="440.5" r="2.15" fill="#5c82f3"/><circle cx="820.4" cy="440.5" r="2.15" fill="#5c82f3"/><circle cx="825.75" cy="440.5" r="2.15" fill="#5c82f3"/><circle cx="831.1" cy="440.5" r="2.15" fill="#5c82f3"/><circle cx="836.45" cy="440.5" r="2.15" fill="#5c82f3"/><circle cx="841.81" cy="440.5" r="2.15" fill="#5c82f3"/><circle cx="847.16" cy="440.5" r="2.15" fill="#5c82f3"/><circle cx="852.51" cy="440.5" r="2.15" fill="#5c82f3"/><circle cx="857.86" cy="440.5" r="2.15" fill="#5c82f3"/><circle cx="863.21" cy="440.5" r="2.15" fill="#5c82f3"/><circle cx="868.56" cy="440.5" r="2.15" fill="#5c82f3"/><circle cx="873.92" cy="440.5" r="2.15" fill="#5c82f3"/><circle cx="879.27" cy="440.5" r="2.15" fill="#5c82f3"/><circle cx="884.62" cy="440.5" r="2.15" fill="#5c82f3"/><circle cx="889.97" cy="440.5" r="2.15" fill="#5c82f3"/><circle cx="895.32" cy="440.5" r="2.15" fill="#5c82f3"/><line x1="482" y1="521.9" x2="498.6" y2="521.9" stroke="#6a8df5" stroke-width="1.6"/><circle cx="490.3" cy="521.9" r="3.9" fill="#5c82f3"/><line x1="180.5" y1="585.5" x2="898" y2="585.5" stroke="#e4e8f3" stroke-width="1"/><line x1="180.5" y1="615.5" x2="898" y2="615.5" stroke="#e4e8f3" stroke-width="1"/><line x1="180.5" y1="644.5" x2="898" y2="644.5" stroke="#e4e8f3" stroke-width="1"/><line x1="180.5" y1="673.5" x2="898" y2="673.5" stroke="#e4e8f3" stroke-width="1"/><polyline fill="none" stroke="#6a8df5" stroke-width="1" points="182.75,598.5 188.07,599.75 193.39,596.3 198.71,599.75 204.03,600.5 209.35,600.5 214.67,600.5 219.99,600.5 225.31,600.5 230.63,600.5 235.95,600.5 241.27,601.25 246.59,600.5 251.91,601.1 257.23,601.1 262.55,601.1 267.87,601.1 273.19,601.1 278.51,601.1 283.83,601.1 289.15,601.1 294.47,601.1 299.79,601.1 305.11,601.1 310.43,601.1 315.75,601.1 321.07,601.1 326.39,601.1 331.71,601.1 337.03,601.1 342.35,601.1 347.67,601.1 352.99,601.1 358.31,601.1 363.63,601.1 368.95,601.1 374.27,601.1 379.59,601.1 384.91,601.1 390.23,601.1 395.55,601.1 400.87,601.1 406.19,601.1 411.51,601.1 416.83,601.1 422.15,601.1 427.47,601.1 432.79,601.1 438.11,601.1 443.43,601.1 448.75,601.1 454.07,601.1 459.39,601.1 464.71,601.1 470.03,601.1 475.35,595 480.67,602.6 485.99,602.2 491.31,601.4 496.63,601.4 501.95,601.4 507.27,601.4 512.59,600.7 517.91,600.25 523.23,600.25 528.55,600.25 533.87,600.25 539.19,600.25 544.51,600.25 549.83,600.25 555.15,599.5 560.47,599.5 565.79,599.5 571.11,599.5 576.43,599.5 581.75,599.5 587.07,600.25 592.39,599.5 597.71,599.5 603.03,598.4 608.35,599 613.67,599 618.99,598.4 624.31,634 629.63,624.2 634.95,619.6 640.27,612.3 645.59,608.4 650.91,606.7 656.23,605 661.55,603.8 666.87,603.1 672.19,602.6 677.51,602.6 682.83,602.1 688.15,601.6 693.47,601.6 698.79,601.6 704.11,601.6 709.43,601.6 714.75,601.6 720.07,600.9 725.39,602.1 730.71,601.6 736.03,601.6 741.35,602.6 746.67,603.3 751.99,603.3 757.31,602.6 762.63,602.4 767.95,630.2 773.27,611.75 778.59,610.7 783.91,610.25 789.23,609.8 794.55,637 799.87,630.8 805.19,617.75 810.51,613.7 815.83,613.25 821.15,612.5 826.47,612.5 831.79,612.5 837.11,609 842.43,606.5 847.75,628.25 853.07,613.25 858.39,615.5 863.71,614.3 869.03,613.25 874.35,612.5 879.67,611.3 884.99,610.25 890.31,638.3 895.63,613.7"/><circle cx="182.75" cy="598.5" r="2.15" fill="#5c82f3"/><circle cx="188.07" cy="599.75" r="2.15" fill="#5c82f3"/><circle cx="193.39" cy="596.3" r="2.15" fill="#5c82f3"/><circle cx="198.71" cy="599.75" r="2.15" fill="#5c82f3"/><circle cx="204.03" cy="600.5" r="2.15" fill="#5c82f3"/><circle cx="209.35" cy="600.5" r="2.15" fill="#5c82f3"/><circle cx="214.67" cy="600.5" r="2.15" fill="#5c82f3"/><circle cx="219.99" cy="600.5" r="2.15" fill="#5c82f3"/><circle cx="225.31" cy="600.5" r="2.15" fill="#5c82f3"/><circle cx="230.63" cy="600.5" r="2.15" fill="#5c82f3"/><circle cx="235.95" cy="600.5" r="2.15" fill="#5c82f3"/><circle cx="241.27" cy="601.25" r="2.15" fill="#5c82f3"/><circle cx="246.59" cy="600.5" r="2.15" fill="#5c82f3"/><circle cx="251.91" cy="601.1" r="2.15" fill="#5c82f3"/><circle cx="257.23" cy="601.1" r="2.15" fill="#5c82f3"/><circle cx="262.55" cy="601.1" r="2.15" fill="#5c82f3"/><circle cx="267.87" cy="601.1" r="2.15" fill="#5c82f3"/><circle cx="273.19" cy="601.1" r="2.15" fill="#5c82f3"/><circle cx="278.51" cy="601.1" r="2.15" fill="#5c82f3"/><circle cx="283.83" cy="601.1" r="2.15" fill="#5c82f3"/><circle cx="289.15" cy="601.1" r="2.15" fill="#5c82f3"/><circle cx="294.47" cy="601.1" r="2.15" fill="#5c82f3"/><circle cx="299.79" cy="601.1" r="2.15" fill="#5c82f3"/><circle cx="305.11" cy="601.1" r="2.15" fill="#5c82f3"/><circle cx="310.43" cy="601.1" r="2.15" fill="#5c82f3"/><circle cx="315.75" cy="601.1" r="2.15" fill="#5c82f3"/><circle cx="321.07" cy="601.1" r="2.15" fill="#5c82f3"/><circle cx="326.39" cy="601.1" r="2.15" fill="#5c82f3"/><circle cx="331.71" cy="601.1" r="2.15" fill="#5c82f3"/><circle cx="337.03" cy="601.1" r="2.15" fill="#5c82f3"/><circle cx="342.35" cy="601.1" r="2.15" fill="#5c82f3"/><circle cx="347.67" cy="601.1" r="2.15" fill="#5c82f3"/><circle cx="352.99" cy="601.1" r="2.15" fill="#5c82f3"/><circle cx="358.31" cy="601.1" r="2.15" fill="#5c82f3"/><circle cx="363.63" cy="601.1" r="2.15" fill="#5c82f3"/><circle cx="368.95" cy="601.1" r="2.15" fill="#5c82f3"/><circle cx="374.27" cy="601.1" r="2.15" fill="#5c82f3"/><circle cx="379.59" cy="601.1" r="2.15" fill="#5c82f3"/><circle cx="384.91" cy="601.1" r="2.15" fill="#5c82f3"/><circle cx="390.23" cy="601.1" r="2.15" fill="#5c82f3"/><circle cx="395.55" cy="601.1" r="2.15" fill="#5c82f3"/><circle cx="400.87" cy="601.1" r="2.15" fill="#5c82f3"/><circle cx="406.19" cy="601.1" r="2.15" fill="#5c82f3"/><circle cx="411.51" cy="601.1" r="2.15" fill="#5c82f3"/><circle cx="416.83" cy="601.1" r="2.15" fill="#5c82f3"/><circle cx="422.15" cy="601.1" r="2.15" fill="#5c82f3"/><circle cx="427.47" cy="601.1" r="2.15" fill="#5c82f3"/><circle cx="432.79" cy="601.1" r="2.15" fill="#5c82f3"/><circle cx="438.11" cy="601.1" r="2.15" fill="#5c82f3"/><circle cx="443.43" cy="601.1" r="2.15" fill="#5c82f3"/><circle cx="448.75" cy="601.1" r="2.15" fill="#5c82f3"/><circle cx="454.07" cy="601.1" r="2.15" fill="#5c82f3"/><circle cx="459.39" cy="601.1" r="2.15" fill="#5c82f3"/><circle cx="464.71" cy="601.1" r="2.15" fill="#5c82f3"/><circle cx="470.03" cy="601.1" r="2.15" fill="#5c82f3"/><circle cx="475.35" cy="595" r="2.15" fill="#5c82f3"/><circle cx="480.67" cy="602.6" r="2.15" fill="#5c82f3"/><circle cx="485.99" cy="602.2" r="2.15" fill="#5c82f3"/><circle cx="491.31" cy="601.4" r="2.15" fill="#5c82f3"/><circle cx="496.63" cy="601.4" r="2.15" fill="#5c82f3"/><circle cx="501.95" cy="601.4" r="2.15" fill="#5c82f3"/><circle cx="507.27" cy="601.4" r="2.15" fill="#5c82f3"/><circle cx="512.59" cy="600.7" r="2.15" fill="#5c82f3"/><circle cx="517.91" cy="600.25" r="2.15" fill="#5c82f3"/><circle cx="523.23" cy="600.25" r="2.15" fill="#5c82f3"/><circle cx="528.55" cy="600.25" r="2.15" fill="#5c82f3"/><circle cx="533.87" cy="600.25" r="2.15" fill="#5c82f3"/><circle cx="539.19" cy="600.25" r="2.15" fill="#5c82f3"/><circle cx="544.51" cy="600.25" r="2.15" fill="#5c82f3"/><circle cx="549.83" cy="600.25" r="2.15" fill="#5c82f3"/><circle cx="555.15" cy="599.5" r="2.15" fill="#5c82f3"/><circle cx="560.47" cy="599.5" r="2.15" fill="#5c82f3"/><circle cx="565.79" cy="599.5" r="2.15" fill="#5c82f3"/><circle cx="571.11" cy="599.5" r="2.15" fill="#5c82f3"/><circle cx="576.43" cy="599.5" r="2.15" fill="#5c82f3"/><circle cx="581.75" cy="599.5" r="2.15" fill="#5c82f3"/><circle cx="587.07" cy="600.25" r="2.15" fill="#5c82f3"/><circle cx="592.39" cy="599.5" r="2.15" fill="#5c82f3"/><circle cx="597.71" cy="599.5" r="2.15" fill="#5c82f3"/><circle cx="603.03" cy="598.4" r="2.15" fill="#5c82f3"/><circle cx="608.35" cy="599" r="2.15" fill="#5c82f3"/><circle cx="613.67" cy="599" r="2.15" fill="#5c82f3"/><circle cx="618.99" cy="598.4" r="2.15" fill="#5c82f3"/><circle cx="624.31" cy="634" r="2.15" fill="#5c82f3"/><circle cx="629.63" cy="624.2" r="2.15" fill="#5c82f3"/><circle cx="634.95" cy="619.6" r="2.15" fill="#5c82f3"/><circle cx="640.27" cy="612.3" r="2.15" fill="#5c82f3"/><circle cx="645.59" cy="608.4" r="2.15" fill="#5c82f3"/><circle cx="650.91" cy="606.7" r="2.15" fill="#5c82f3"/><circle cx="656.23" cy="605" r="2.15" fill="#5c82f3"/><circle cx="661.55" cy="603.8" r="2.15" fill="#5c82f3"/><circle cx="666.87" cy="603.1" r="2.15" fill="#5c82f3"/><circle cx="672.19" cy="602.6" r="2.15" fill="#5c82f3"/><circle cx="677.51" cy="602.6" r="2.15" fill="#5c82f3"/><circle cx="682.83" cy="602.1" r="2.15" fill="#5c82f3"/><circle cx="688.15" cy="601.6" r="2.15" fill="#5c82f3"/><circle cx="693.47" cy="601.6" r="2.15" fill="#5c82f3"/><circle cx="698.79" cy="601.6" r="2.15" fill="#5c82f3"/><circle cx="704.11" cy="601.6" r="2.15" fill="#5c82f3"/><circle cx="709.43" cy="601.6" r="2.15" fill="#5c82f3"/><circle cx="714.75" cy="601.6" r="2.15" fill="#5c82f3"/><circle cx="720.07" cy="600.9" r="2.15" fill="#5c82f3"/><circle cx="725.39" cy="602.1" r="2.15" fill="#5c82f3"/><circle cx="730.71" cy="601.6" r="2.15" fill="#5c82f3"/><circle cx="736.03" cy="601.6" r="2.15" fill="#5c82f3"/><circle cx="741.35" cy="602.6" r="2.15" fill="#5c82f3"/><circle cx="746.67" cy="603.3" r="2.15" fill="#5c82f3"/><circle cx="751.99" cy="603.3" r="2.15" fill="#5c82f3"/><circle cx="757.31" cy="602.6" r="2.15" fill="#5c82f3"/><circle cx="762.63" cy="602.4" r="2.15" fill="#5c82f3"/><circle cx="767.95" cy="630.2" r="2.15" fill="#5c82f3"/><circle cx="773.27" cy="611.75" r="2.15" fill="#5c82f3"/><circle cx="778.59" cy="610.7" r="2.15" fill="#5c82f3"/><circle cx="783.91" cy="610.25" r="2.15" fill="#5c82f3"/><circle cx="789.23" cy="609.8" r="2.15" fill="#5c82f3"/><circle cx="794.55" cy="637" r="2.15" fill="#5c82f3"/><circle cx="799.87" cy="630.8" r="2.15" fill="#5c82f3"/><circle cx="805.19" cy="617.75" r="2.15" fill="#5c82f3"/><circle cx="810.51" cy="613.7" r="2.15" fill="#5c82f3"/><circle cx="815.83" cy="613.25" r="2.15" fill="#5c82f3"/><circle cx="821.15" cy="612.5" r="2.15" fill="#5c82f3"/><circle cx="826.47" cy="612.5" r="2.15" fill="#5c82f3"/><circle cx="831.79" cy="612.5" r="2.15" fill="#5c82f3"/><circle cx="837.11" cy="609" r="2.15" fill="#5c82f3"/><circle cx="842.43" cy="606.5" r="2.15" fill="#5c82f3"/><circle cx="847.75" cy="628.25" r="2.15" fill="#5c82f3"/><circle cx="853.07" cy="613.25" r="2.15" fill="#5c82f3"/><circle cx="858.39" cy="615.5" r="2.15" fill="#5c82f3"/><circle cx="863.71" cy="614.3" r="2.15" fill="#5c82f3"/><circle cx="869.03" cy="613.25" r="2.15" fill="#5c82f3"/><circle cx="874.35" cy="612.5" r="2.15" fill="#5c82f3"/><circle cx="879.67" cy="611.3" r="2.15" fill="#5c82f3"/><circle cx="884.99" cy="610.25" r="2.15" fill="#5c82f3"/><circle cx="890.31" cy="638.3" r="2.15" fill="#5c82f3"/><circle cx="895.63" cy="613.7" r="2.15" fill="#5c82f3"/></svg>
<!-- scrollbar -->
<div class="abs" style="left:955.6px;top:115px;width:6.2px;height:565px;background:#f8f8f8"></div>
<div class="abs" style="left:956px;top:118px;width:5px;height:215px;background:#c1c1c1"></div>
<div class="abs" style="left:968px;top:54px;width:1px;height:626px;background:#e6e6e6"></div>
</div>
</div>
</body></html>
